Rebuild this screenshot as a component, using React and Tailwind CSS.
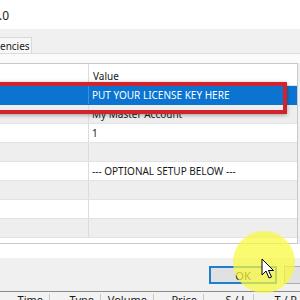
const rows = [
  { value: 'PUT YOUR LICENSE KEY HERE', selected: true },
  { value: 'My Master Account' },
  { value: '1' },
  { value: '' },
  { value: '--- OPTIONAL SETUP BELOW ---' },
  { value: '' },
  { value: '' },
  { value: '' },
]

const cols = [
  { label: 'Time', w: 'w-[50px]' },
  { label: 'Type', w: 'w-[51px]' },
  { label: 'Volume', w: 'w-[53px]' },
  { label: 'Price', w: 'w-[50px]' },
  { label: 'S / L', w: 'w-[50px]' },
  { label: 'T / P', w: 'w-[50px]' },
]

function Cursor() {
  return (
    <svg width="14" height="22" viewBox="0 0 14 22" className="absolute left-[261px] top-[258px]">
      <path d="M1 1 L1 17 L5 13 L8 20 L10.5 19 L7.5 12.5 L12.5 12.5 Z" fill="#fff" stroke="#000" strokeWidth="1" strokeLinejoin="round" />
    </svg>
  )
}

export default function App() {
  return (
    <div className="relative w-[300px] h-[300px] overflow-hidden bg-[#f0f0f0] text-[10px] text-[#1a1a1a] font-['Noto_Sans',sans-serif] flex flex-col">
      {/* title */}
      <div className="h-[29px] shrink-0 bg-white flex items-center text-[12px] leading-none">
        <span className="-ml-[1px] mt-[3px]">.0</span>
      </div>

      {/* tab strip */}
      <div className="h-[24px] shrink-0 flex items-end">
        <div className="h-[16px] w-[32px] bg-[#f7f7f7] border border-l-0 border-b-0 border-[#d9d9d9] flex items-center leading-none">
          encies
        </div>
      </div>

      {/* panel */}
      <div className="h-[10px] shrink-0 bg-[#fafafa] border-t border-[#dcdcdc]" />

      {/* table */}
      <div className="h-[181px] shrink-0 w-[298px] bg-white border-t border-r border-b border-[#c8c8c8] flex flex-col">
        <div className="h-[22px] shrink-0 flex border-b border-[#e5e5e5]">
          <div className="w-[89px] border-r border-[#dcdcdc]" />
          <div className="pl-[4px] pt-[7px] leading-none">Value</div>
        </div>
        {rows.map((r, i) => (
          <div
            key={i}
            className={
              'h-[19px] shrink-0 flex border-b ' +
              (r.selected
                ? 'bg-[#0a74d0] text-white border-[#0a74d0]'
                : i % 2 === 1
                ? 'bg-[#eeeeee] border-[#e2e2e2]'
                : 'bg-white border-[#e2e2e2]')
            }
          >
            <div className={'w-[89px] border-r ' + (r.selected ? 'border-[#3d8fd8]' : 'border-[#dcdcdc]')} />
            <div className="pl-[3px] flex items-center leading-none whitespace-nowrap">{r.value}</div>
          </div>
        ))}
      </div>

      {/* white strip */}
      <div className="h-[14px] shrink-0 bg-white" />

      {/* buttons */}
      <div className="h-[33px] shrink-0 flex items-start pt-[8px] pl-[209px] gap-[7px]">
        <div className="shrink-0 w-[68px] h-[18px] border-2 border-[#1f7fcf] bg-[#e1e1e1] flex items-center justify-center leading-none text-[11px]">
          OK
        </div>
        <div className="shrink-0 w-[60px] h-[18px] border border-[#adadad] bg-[#e1e1e1]" />
      </div>

      {/* bottom header */}
      <div className="flex-1 border-t border-[#8a8a8a] bg-[#f2f2f2] flex text-[11px] leading-none pt-[2px]">
        {cols.map(c => (
          <div key={c.label} className={c.w + ' shrink-0 border-r border-[#c8c8c8] whitespace-nowrap text-right pr-[6px]'}>
            {c.label}
          </div>
        ))}
      </div>

      {/* red highlight box */}
      <div className="absolute -left-[10px] top-[82px] w-[297px] h-[32px] border-[4px] border-[#d2222c] shadow-[0_1px_4px_rgba(0,0,0,0.35)]" />

      {/* click highlight */}
      <div className="absolute left-[233px] top-[231px] w-[62px] h-[62px] rounded-full bg-[rgba(250,250,60,0.72)]" />

      <Cursor />
    </div>
  )
}
